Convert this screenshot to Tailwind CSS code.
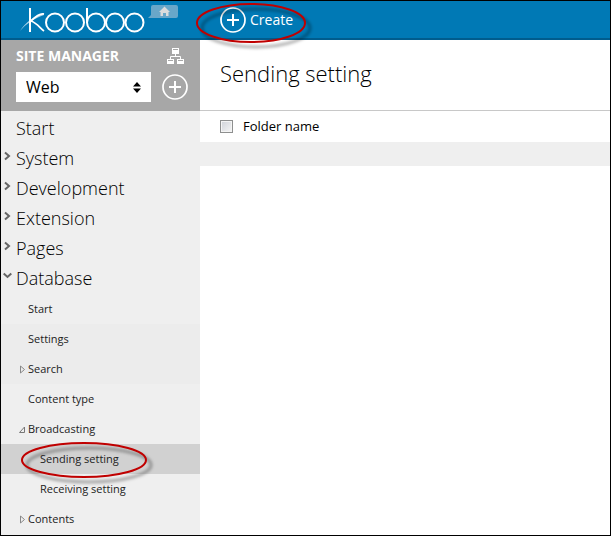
<!DOCTYPE html>
<html lang="en">
<head>
<meta charset="utf-8">
<meta name="viewport" content="width=device-width, initial-scale=1">
<title>Kooboo - Sending setting</title>
<script src="https://cdn.jsdelivr.net/npm/@tailwindcss/browser@4"></script>
</head>
<body class="flex min-h-screen flex-col border border-black bg-white font-['Open_Sans','Noto_Sans',sans-serif] text-black">
  <header class="flex h-[39px] shrink-0 border-b-2 border-[#005c8d] bg-[#0079b5]">
    <div class="flex w-[199px] shrink-0 items-start">
      <a href="#" aria-label="Kooboo" class="ml-[18px] mt-[5px]">
        <svg class="block" width="127" height="28" viewBox="19 6 127 28" fill="none" stroke="#fff" stroke-width="2">
          <line x1="30" y1="8" x2="30" y2="32"/>
          <path d="M44 14C40 13 35 17 31 21C37 23 40 28 44 31" stroke-width="1.8"/>
          <path d="M44 13C35 15 25 23 20 31C26 24 33 19 44 15Z" fill="#fff" stroke="none" opacity=".65"/>
          <circle cx="55" cy="22.500" r="9"/>
          <circle cx="75" cy="22.500" r="9"/>
          <line x1="87" y1="8" x2="87" y2="23"/>
          <circle cx="96" cy="22.500" r="9"/>
          <circle cx="115" cy="22.500" r="9"/>
          <circle cx="134.500" cy="22.500" r="9"/>
        </svg>
      </a>
      <a href="#" aria-label="Home" class="ml-[2px] mt-1">
        <svg class="block" width="30" height="14" viewBox="0 0 30 14">
          <path d="M5 0H28Q30 0 30 2V11Q30 13 28 13H0L3 10V2Q3 0 5 0Z" fill="#69a7c9"/>
          <path d="M16.500 1.500L22 7H20.500V11H18V8H15V11H12.500V7H11Z" fill="#dcdcdc"/>
        </svg>
      </a>
    </div>
    <div class="relative ml-5 flex items-center">
      <button type="button" class="flex items-center gap-1 text-sm text-white">
        <svg width="26" height="26" viewBox="0 0 26 26" fill="none" stroke="#fff"><circle cx="13" cy="13" r="12" stroke-width="1.700"/><path d="M13 7V19M7 13H19" stroke-width="2"/></svg>
        <span>Create</span>
      </button>
      <svg class="pointer-events-none absolute -left-[26px] top-0 z-10" width="122" height="54" viewBox="0 0 122 54" fill="none" aria-hidden="true">
        <defs><filter id="soft" x="-20%" y="-20%" width="140%" height="150%"><feGaussianBlur stdDeviation="1.500"/></filter></defs>
        <ellipse cx="62" cy="27" rx="54" ry="19" stroke="#000" stroke-opacity=".3" stroke-width="3" filter="url(#soft)"/>
        <ellipse cx="57" cy="22" rx="54" ry="19" stroke="#c00000" stroke-width="2"/>
      </svg>
    </div>
  </header>

  <div class="flex grow">
    <aside class="flex w-[199px] shrink-0 flex-col bg-[#efefef]">
      <div class="h-[71px] bg-[#a7a7a7] pl-[15px] pr-3 pt-2">
        <div class="flex h-4 items-center justify-between text-white">
          <h2 class="text-sm font-bold">SITE MANAGER</h2>
          <button type="button" aria-label="Site map" class="mr-1">
            <svg class="block" width="17" height="16" viewBox="0 0 17 16" fill="#fff"><path d="M5 0H12V6H5ZM0 11H7V16H0ZM10 11H17V16H10Z"/><path d="M8.500 6V8.500M3.500 11V8.500H13.500V11" fill="none" stroke="#fff"/><path d="M6 1.500H11M1 12.500H6M11 12.500H16" stroke="#a7a7a7"/></svg>
          </button>
        </div>
        <div class="mt-2 flex items-center justify-between">
          <div class="relative">
            <select aria-label="Site" class="block h-[30px] w-[135px] appearance-none bg-white pl-[10px] text-base text-black"><option>Web</option></select>
            <svg class="pointer-events-none absolute right-[10px] top-[10px]" width="8" height="11" viewBox="0 0 8 11"><path d="M4 0L8 4.500H0ZM0 6.500H8L4 11Z"/></svg>
          </div>
          <button type="button" aria-label="Add site" class="text-white">
            <svg class="block" width="26" height="26" viewBox="0 0 26 26" fill="none" stroke="#fff"><circle cx="13" cy="13" r="12" stroke-width="1.700"/><path d="M13 7V19M7 13H19" stroke-width="2"/></svg>
          </button>
        </div>
      </div>

      <nav aria-label="Site menu" class="pb-px pt-[2px]">
        <ul class="text-lg font-light">
          <li><a href="#" class="flex h-[30px] items-center pl-[15px]">Start</a></li>
          <li><a href="#" class="flex h-[30px] items-center gap-1 pl-[3px]"><svg width="8" height="10" viewBox="0 0 8 10" class="mb-1" fill="none" stroke="#666" stroke-width="2"><path d="M1 1.500L5 5L1 8.500"/></svg>System</a></li>
          <li><a href="#" class="flex h-[30px] items-center gap-1 pl-[3px]"><svg width="8" height="10" viewBox="0 0 8 10" class="mb-1" fill="none" stroke="#666" stroke-width="2"><path d="M1 1.500L5 5L1 8.500"/></svg>Development</a></li>
          <li><a href="#" class="flex h-[30px] items-center gap-1 pl-[3px]"><svg width="8" height="10" viewBox="0 0 8 10" class="mb-1" fill="none" stroke="#666" stroke-width="2"><path d="M1 1.500L5 5L1 8.500"/></svg>Extension</a></li>
          <li><a href="#" class="flex h-[30px] items-center gap-1 pl-[3px]"><svg width="8" height="10" viewBox="0 0 8 10" class="mb-1" fill="none" stroke="#666" stroke-width="2"><path d="M1 1.500L5 5L1 8.500"/></svg>Pages</a></li>
          <li>
            <a href="#" class="flex h-[30px] items-center gap-1 pl-[2px]"><svg width="9" height="8" viewBox="0 0 9 8" class="mb-1" fill="none" stroke="#666" stroke-width="2"><path d="M.7 1.500L4.500 5L8.300 1.500"/></svg>Database</a>
            <ul class="pt-px text-[11px] font-normal text-[#222]">
              <li><a href="#" class="flex h-[30px] items-center pl-[27px]">Start</a></li>
              <li class="bg-[#ececec]"><a href="#" class="flex h-[30px] items-center pl-[27px]">Settings</a></li>
              <li class="bg-[#ececec]"><a href="#" class="flex h-[30px] items-center gap-[3px] pl-[18px]"><svg width="6" height="9" viewBox="0 0 6 9" fill="none" stroke="#888"><path d="M1.500 1L5.500 4.500L1.500 8Z"/></svg>Search</a></li>
              <li><a href="#" class="flex h-[30px] items-center pl-[27px]">Content type</a></li>
              <li>
                <a href="#" class="flex h-[30px] items-center gap-[3px] pl-[18px]"><svg width="6" height="7" viewBox="0 0 6 7" fill="none" stroke="#777"><path d="M5.500 1V6.500H.5Z"/></svg>Broadcasting</a>
                <ul>
                  <li class="relative bg-[#d1d1d1]">
                    <a href="#" aria-current="page" class="flex h-[30px] items-center pl-[39px]">Sending setting</a>
                    <svg class="pointer-events-none absolute left-[18px] -top-1 z-10" width="140" height="48" viewBox="0 0 140 48" fill="none" aria-hidden="true">
                      <ellipse cx="70" cy="25" rx="62" ry="17" stroke="#000" stroke-opacity=".3" stroke-width="3" filter="url(#soft)"/>
                      <ellipse cx="65" cy="20" rx="62" ry="17" stroke="#c00000" stroke-width="2"/>
                    </svg>
                  </li>
                  <li><a href="#" class="flex h-[30px] items-center pl-[39px]">Receiving setting</a></li>
                </ul>
              </li>
              <li><a href="#" class="flex h-[30px] items-center gap-[3px] pl-[18px]"><svg width="6" height="9" viewBox="0 0 6 9" fill="none" stroke="#888"><path d="M1.500 1L5.500 4.500L1.500 8Z"/></svg>Contents</a></li>
            </ul>
          </li>
        </ul>
      </nav>
    </aside>

    <main class="min-w-0 grow">
      <h1 class="flex h-[70px] items-center pb-1 pl-5 text-[22px] font-light">Sending setting</h1>
      <table class="w-full border-separate border-spacing-0 border-t border-[#c8c8c8] text-left text-[13px]">
        <thead>
          <tr class="h-[31px]">
            <th class="w-[43px] p-0 pl-5"><input type="checkbox" aria-label="Select all folders" class="block size-[13px] appearance-none border border-[#8e8f8f] bg-linear-to-br from-[#cfd2d8] to-[#f6f6f6] shadow-[inset_0_0_0_1px_#f4f4f4]"></th>
            <th class="p-0 font-normal">Folder name</th>
          </tr>
        </thead>
        <tbody>
          <tr class="h-6 bg-[#efefef]"><td colspan="2" class="p-0"></td></tr>
        </tbody>
      </table>
    </main>
  </div>
</body>
</html>
